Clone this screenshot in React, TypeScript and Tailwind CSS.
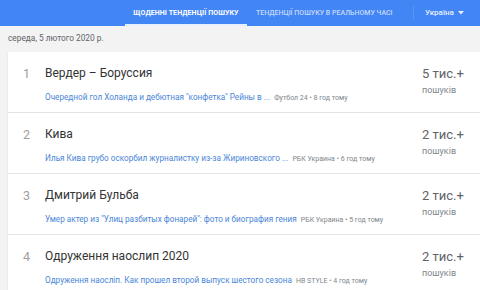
type Trend = {
  rank: number;
  title: string;
  article: string;
  source: string;
  count: string;
};

const trends: Trend[] = [
  {
    rank: 1,
    title: "Вердер – Боруссия",
    article: "Очередной гол Холанда и дебютная \"конфетка\" Рейны в ...",
    source: "Футбол 24 • 8 год тому",
    count: "5 тис.+",
  },
  {
    rank: 2,
    title: "Кива",
    article: "Илья Кива грубо оскорбил журналистку из-за Жириновского ...",
    source: "РБК Украина • 6 год тому",
    count: "2 тис.+",
  },
  {
    rank: 3,
    title: "Дмитрий Бульба",
    article: "Умер актер из \"Улиц разбитых фонарей\": фото и биография гения",
    source: "РБК Украина • 5 год тому",
    count: "2 тис.+",
  },
  {
    rank: 4,
    title: "Одруження наослип 2020",
    article: "Одруження наосліп. Как прошел второй выпуск шестого сезона",
    source: "НВ STYLE • 4 год тому",
    count: "2 тис.+",
  },
];

export default function App() {
  return (
    <div className="w-[480px] h-[290px] overflow-hidden bg-[#f3f3f3] font-['Roboto',sans-serif]">
      {/* шапка */}
      <div className="h-[26px] bg-[#4285f4] flex items-stretch">
        <div className="w-[125px]" />
        <div className="w-[122px] flex items-center justify-center border-b-2 border-[#e8f0fe] pt-[2px]">
          <span className="text-[7px] font-bold text-white tracking-[0.1px]">ЩОДЕННІ ТЕНДЕНЦІЇ ПОШУКУ</span>
        </div>
        <div className="flex items-center pl-[9px] w-[166px]">
          <span className="text-[7px] font-medium text-[#c6dafc]">ТЕНДЕНЦІЇ ПОШУКУ В РЕАЛЬНОМУ ЧАСІ</span>
        </div>
        <div className="flex items-center my-[6px] border-l border-[#5a95f5]" />
        <div className="flex items-center pl-[11px] gap-[4px]">
          <span className="text-[8px] font-medium text-[#e8f0fe]">Україна</span>
          <svg width="6" height="4" viewBox="0 0 6 4">
            <path d="M0 0 L6 0 L3 3.5 Z" fill="#e8f0fe" />
          </svg>
        </div>
      </div>

      {/* дата */}
      <div className="h-[24px] flex items-center pl-[8px]">
        <span className="text-[8.3px] text-[#5f6368]">середа, 5 лютого 2020 р.</span>
      </div>

      {/* список */}
      <div className="ml-[8px] mt-[2px] bg-white shadow-[0_1px_2px_rgba(0,0,0,0.1)]">
        {trends.map((t) => (
          <div
            key={t.rank}
            className="h-[61px] flex border-b border-[#e4e4e4] last:border-b-0"
          >
            <div className="w-[37px] pt-[14px] pl-[15px] text-[12.5px] leading-[15px] text-[#9e9e9e]">
              {t.rank}
            </div>
            <div className="w-[377px] pt-[14px]">
              <div className="text-[12px] text-[#333333] leading-[15px]">{t.title}</div>
              <div className="mt-[10px] flex items-baseline gap-[4px] whitespace-nowrap">
                <span className="text-[8.2px] text-[#4a86d8]">{t.article}</span>
                <span className="text-[7px] text-[#80868b]">{t.source}</span>
              </div>
            </div>
            <div className="pt-[14px]">
              <div className="text-[13px] text-[#5f6368] leading-[15px]">{t.count}</div>
              <div className="mt-[4px] text-[9px] text-[#80868b] leading-[11px]">пошуків</div>
            </div>
          </div>
        ))}
      </div>
    </div>
  );
}
